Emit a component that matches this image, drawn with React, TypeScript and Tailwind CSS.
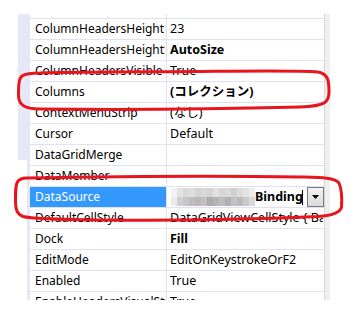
import React from "react";

type Row = { name: string; value: string; bold?: boolean; selected?: boolean };

const rows: Row[] = [
  { name: "ColumnHeadersHeight", value: "23" },
  { name: "ColumnHeadersHeightSizeMode", value: "AutoSize", bold: true },
  { name: "ColumnHeadersVisible", value: "True" },
  { name: "Columns", value: "(コレクション)", bold: true },
  { name: "ContextMenuStrip", value: "(なし)" },
  { name: "Cursor", value: "Default" },
  { name: "DataGridMerge", value: "" },
  { name: "DataMember", value: "" },
  { name: "DataSource", value: "", selected: true },
  { name: "DefaultCellStyle", value: "DataGridViewCellStyle { BackColor=Color" },
  { name: "Dock", value: "Fill", bold: true },
  { name: "EditMode", value: "EditOnKeystrokeOrF2" },
  { name: "Enabled", value: "True" },
  { name: "EnableHeadersVisualStyles", value: "True" },
];

const topTiles = ["#f2f2f2", "#e2e2e2", "#d9d9d9", "#dedede", "#d2d2d4", "#dcd6d4", "#d4d4d6", "#e0e0e0", "#d6d6d6", "#dadada", "#d0d0d0", "#dcdcdc", "#e4e4e4", "#ececec"];
const botTiles = ["#ebebeb", "#d0d0d0", "#c6c6c6", "#c0bcbb", "#b8b8b8", "#c4c0be", "#acacac", "#b4b4b4", "#bcbcbc", "#b0b0b0", "#c2c2c2", "#bababa", "#cacaca", "#d8d8d8"];

function Mosaic() {
  return (
    <div className="flex flex-col w-[84px] h-[18px] shrink-0">
      <div className="flex h-[9px]">
        {topTiles.map((c, i) => (
          <div key={i} className="w-[6px] h-[9px]" style={{ backgroundColor: c }} />
        ))}
      </div>
      <div className="flex h-[9px]">
        {botTiles.map((c, i) => (
          <div key={i} className="w-[6px] h-[9px]" style={{ backgroundColor: c }} />
        ))}
      </div>
    </div>
  );
}

export default function App() {
  return (
    <div
      className="relative w-[355px] h-[319px] bg-white overflow-hidden text-[12px] text-black"
      style={{ fontFamily: '"Noto Sans", "Noto Sans CJK JP", sans-serif' }}
    >
      <div className="flex h-[300px] pt-[14px] pl-[18px]">
        <div className="w-[12px] flex flex-col">
          <div className="h-[146px] bg-[#e6e8f8]" />
          <div className="flex-1 ml-[9px] bg-[#e6e8f8]" />
        </div>
        <div className="w-[294px] overflow-hidden flex flex-col">
          <div className="h-[5px] shrink-0 flex border-b border-[#dfe2f3]">
            <div className="w-[137px] border-r border-[#dfe2f3]" />
          </div>
          {rows.map((r) => (
            <div key={r.name} className="h-[21px] shrink-0 flex border-b border-[#dfe2f3]">
              <div
                className={`w-[137px] shrink-0 border-r border-[#dfe2f3] pl-[5px] flex items-center ${
                  r.selected ? "bg-[#3399ff] text-white" : ""
                }`}
              >
                <span className="block w-[130px] overflow-hidden whitespace-nowrap">{r.name}</span>
              </div>
              {r.selected ? (
                <div className="flex-1 flex items-center overflow-hidden whitespace-nowrap pl-[4px] text-[12.5px]">
                  <Mosaic />
                  <span className="font-bold w-[47px] shrink-0 overflow-hidden">BindingSource1</span>
                  <div className="w-[1px] h-[15px] bg-black shrink-0" />
                  <div className="ml-auto w-[17px] h-[20px] shrink-0 border border-[#7a7a7a] bg-gradient-to-b from-[#f4f4f4] to-[#dadada] flex items-center justify-center">
                    <svg width="7" height="4" viewBox="0 0 7 4">
                      <path d="M0 0 H7 L3.5 4 Z" fill="#000" />
                    </svg>
                  </div>
                </div>
              ) : (
                <div className="flex-1 pl-[3px] flex items-center text-[12.5px]">
                  <span
                    className={`block w-[153px] overflow-hidden whitespace-nowrap ${
                      r.bold ? "font-bold" : ""
                    }`}
                  >
                    {r.value}
                  </span>
                </div>
              )}
            </div>
          ))}
        </div>
        <div className="w-[6px] bg-[#efefef] border-l border-[#d6d6d6]" />
      </div>
      <svg
        className="absolute left-0 top-0 pointer-events-none"
        width="355"
        height="319"
        viewBox="0 0 355 319"
      >
        <path
          d="M 40 73 C 60 72, 120 72, 200 71.5 C 260 71, 300 70.5, 318 72 C 328 74, 329 80, 329 92 C 329 102, 326 106, 300 107 C 240 108.5, 120 110, 40 109 C 24 108.5, 19 105, 18.5 96 C 18.5 86, 18.5 79, 22 76 C 26 73.5, 32 73, 40 73 Z"
          fill="none"
          stroke="#e8141e"
          strokeWidth="3"
        />
        <path
          d="M 26 178 C 80 177, 200 175, 300 177 C 320 177.5, 335 177.5, 339 183 C 342 190, 342 200, 341.5 207 C 340.5 213, 332 215.5, 318 216.5 C 260 219, 180 221, 100 220 C 60 219.5, 32 219, 23 216.5 C 16.5 214, 15.5 209, 15.5 200 C 15.5 190, 15.5 184, 18 181 C 20 179, 22 178, 26 178 Z"
          fill="none"
          stroke="#e8141e"
          strokeWidth="3"
        />
      </svg>
    </div>
  );
}
